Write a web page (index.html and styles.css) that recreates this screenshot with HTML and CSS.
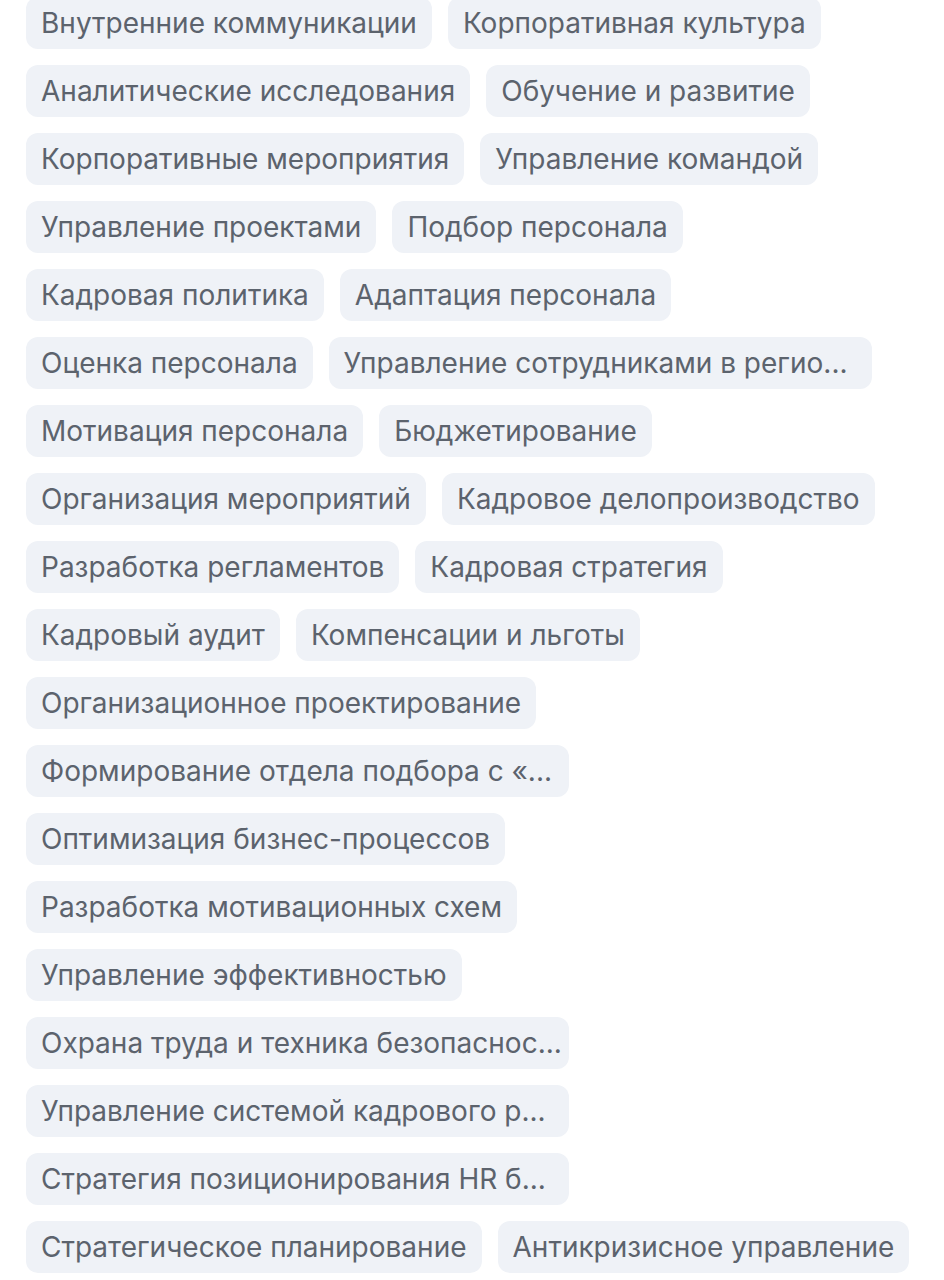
FILE: index.html
```html
<!DOCTYPE html>
<html lang="ru">
<head>
<meta charset="utf-8">
<title>Теги</title>
<link rel="stylesheet" href="styles.css">
</head>
<body>
<div class="tags">
  <div class="row"><span class="tag">Внутренние коммуникации</span><span class="tag">Корпоративная культура</span></div>
  <div class="row"><span class="tag">Аналитические исследования</span><span class="tag">Обучение и развитие</span></div>
  <div class="row"><span class="tag">Корпоративные мероприятия</span><span class="tag">Управление командой</span></div>
  <div class="row"><span class="tag">Управление проектами</span><span class="tag">Подбор персонала</span></div>
  <div class="row"><span class="tag">Кадровая политика</span><span class="tag">Адаптация персонала</span></div>
  <div class="row"><span class="tag">Оценка персонала</span><span class="tag tag-long">Управление сотрудниками в регио...</span></div>
  <div class="row"><span class="tag">Мотивация персонала</span><span class="tag">Бюджетирование</span></div>
  <div class="row"><span class="tag">Организация мероприятий</span><span class="tag">Кадровое делопроизводство</span></div>
  <div class="row"><span class="tag">Разработка регламентов</span><span class="tag">Кадровая стратегия</span></div>
  <div class="row"><span class="tag">Кадровый аудит</span><span class="tag">Компенсации и льготы</span></div>
  <div class="row"><span class="tag">Организационное проектирование</span></div>
  <div class="row"><span class="tag tag-long">Формирование отдела подбора с «...</span></div>
  <div class="row"><span class="tag">Оптимизация бизнес-процессов</span></div>
  <div class="row"><span class="tag">Разработка мотивационных схем</span></div>
  <div class="row"><span class="tag">Управление эффективностью</span></div>
  <div class="row"><span class="tag tag-long">Охрана труда и техника безопаснос...</span></div>
  <div class="row"><span class="tag tag-long">Управление системой кадрового р...</span></div>
  <div class="row"><span class="tag tag-long">Стратегия позиционирования HR б...</span></div>
  <div class="row"><span class="tag">Стратегическое планирование</span><span class="tag">Антикризисное управление</span></div>
</div>
</body>
</html>
```

FILE: styles.css
```css
html, body {
  margin: 0;
  padding: 0;
  background: #ffffff;
}

body {
  font-family: "Inter", "Noto Sans", sans-serif;
  color: #5c636d;
}

.tags {
  display: flex;
  flex-direction: column;
  gap: 16px;
  padding: 0 0 0 26px;
  margin-top: -3px;
}

.row {
  display: flex;
  gap: 16px;
}

.tag {
  display: block;
  box-sizing: border-box;
  height: 52px;
  line-height: 52px;
  padding: 0 15px;
  border-radius: 12px;
  background: #eff2f7;
  font-size: 28px;
  white-space: nowrap;
}

/* truncated labels share one fixed chip width */
.tag-long {
  width: 543px;
}
```
